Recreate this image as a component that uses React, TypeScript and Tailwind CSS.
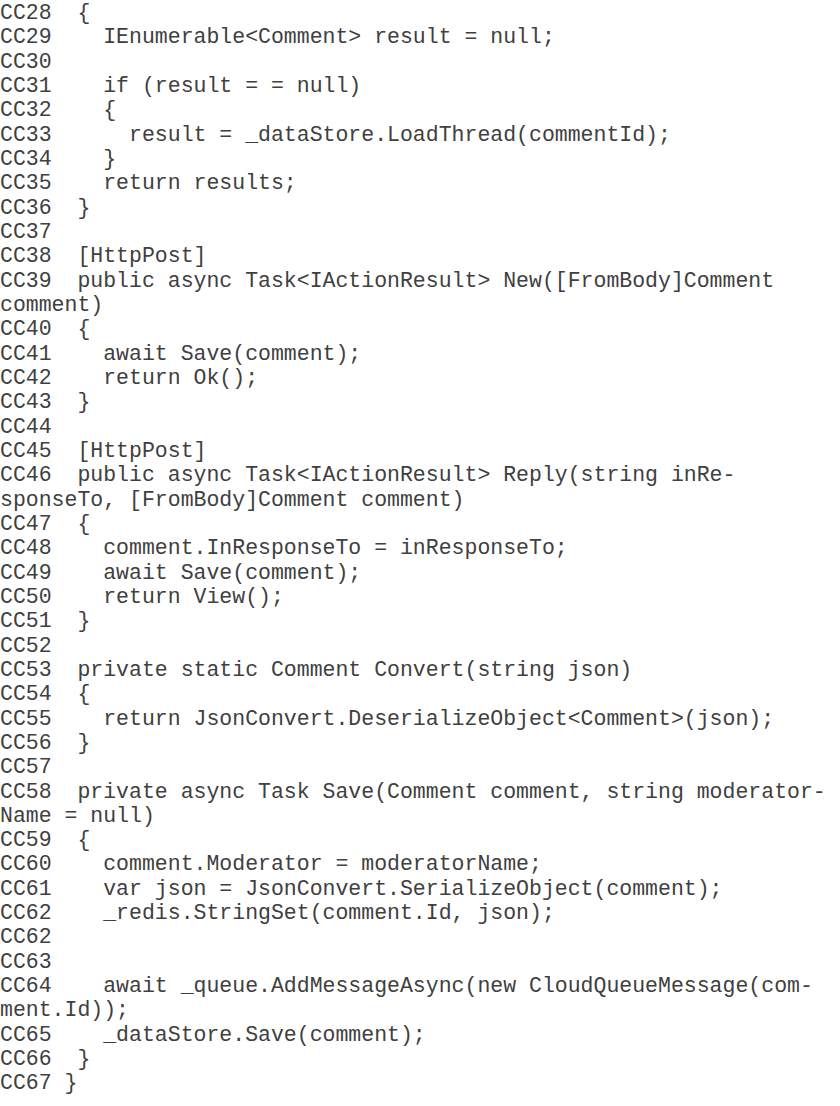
import React from 'react';

const lines: string[] = [
  'CC28  {',
  'CC29    IEnumerable<Comment> result = null;',
  'CC30',
  'CC31    if (result = = null)',
  'CC32    {',
  'CC33      result = _dataStore.LoadThread(commentId);',
  'CC34    }',
  'CC35    return results;',
  'CC36  }',
  'CC37',
  'CC38  [HttpPost]',
  'CC39  public async Task<IActionResult> New([FromBody]Comment',
  'comment)',
  'CC40  {',
  'CC41    await Save(comment);',
  'CC42    return Ok();',
  'CC43  }',
  'CC44',
  'CC45  [HttpPost]',
  'CC46  public async Task<IActionResult> Reply(string inRe-',
  'sponseTo, [FromBody]Comment comment)',
  'CC47  {',
  'CC48    comment.InResponseTo = inResponseTo;',
  'CC49    await Save(comment);',
  'CC50    return View();',
  'CC51  }',
  'CC52',
  'CC53  private static Comment Convert(string json)',
  'CC54  {',
  'CC55    return JsonConvert.DeserializeObject<Comment>(json);',
  'CC56  }',
  'CC57',
  'CC58  private async Task Save(Comment comment, string moderator-',
  'Name = null)',
  'CC59  {',
  'CC60    comment.Moderator = moderatorName;',
  'CC61    var json = JsonConvert.SerializeObject(comment);',
  'CC62    _redis.StringSet(comment.Id, json);',
  'CC62',
  'CC63',
  'CC64    await _queue.AddMessageAsync(new CloudQueueMessage(com-',
  'ment.Id));',
  'CC65    _dataStore.Save(comment);',
  'CC66  }',
  'CC67 }',
];

export default function App() {
  return (
    <div className="min-h-[1106px] w-[840px] bg-white pt-[1px]">
      {/* code listing, one row per printed line */}
      <pre className="m-0 font-['Liberation_Mono','Courier_New',monospace] text-[21.5px] leading-[24.33px] text-[#404040]">
        {lines.map((line, i) => (
          <div key={i} className="h-[24.33px] whitespace-pre">
            {line}
          </div>
        ))}
      </pre>
    </div>
  );
}
